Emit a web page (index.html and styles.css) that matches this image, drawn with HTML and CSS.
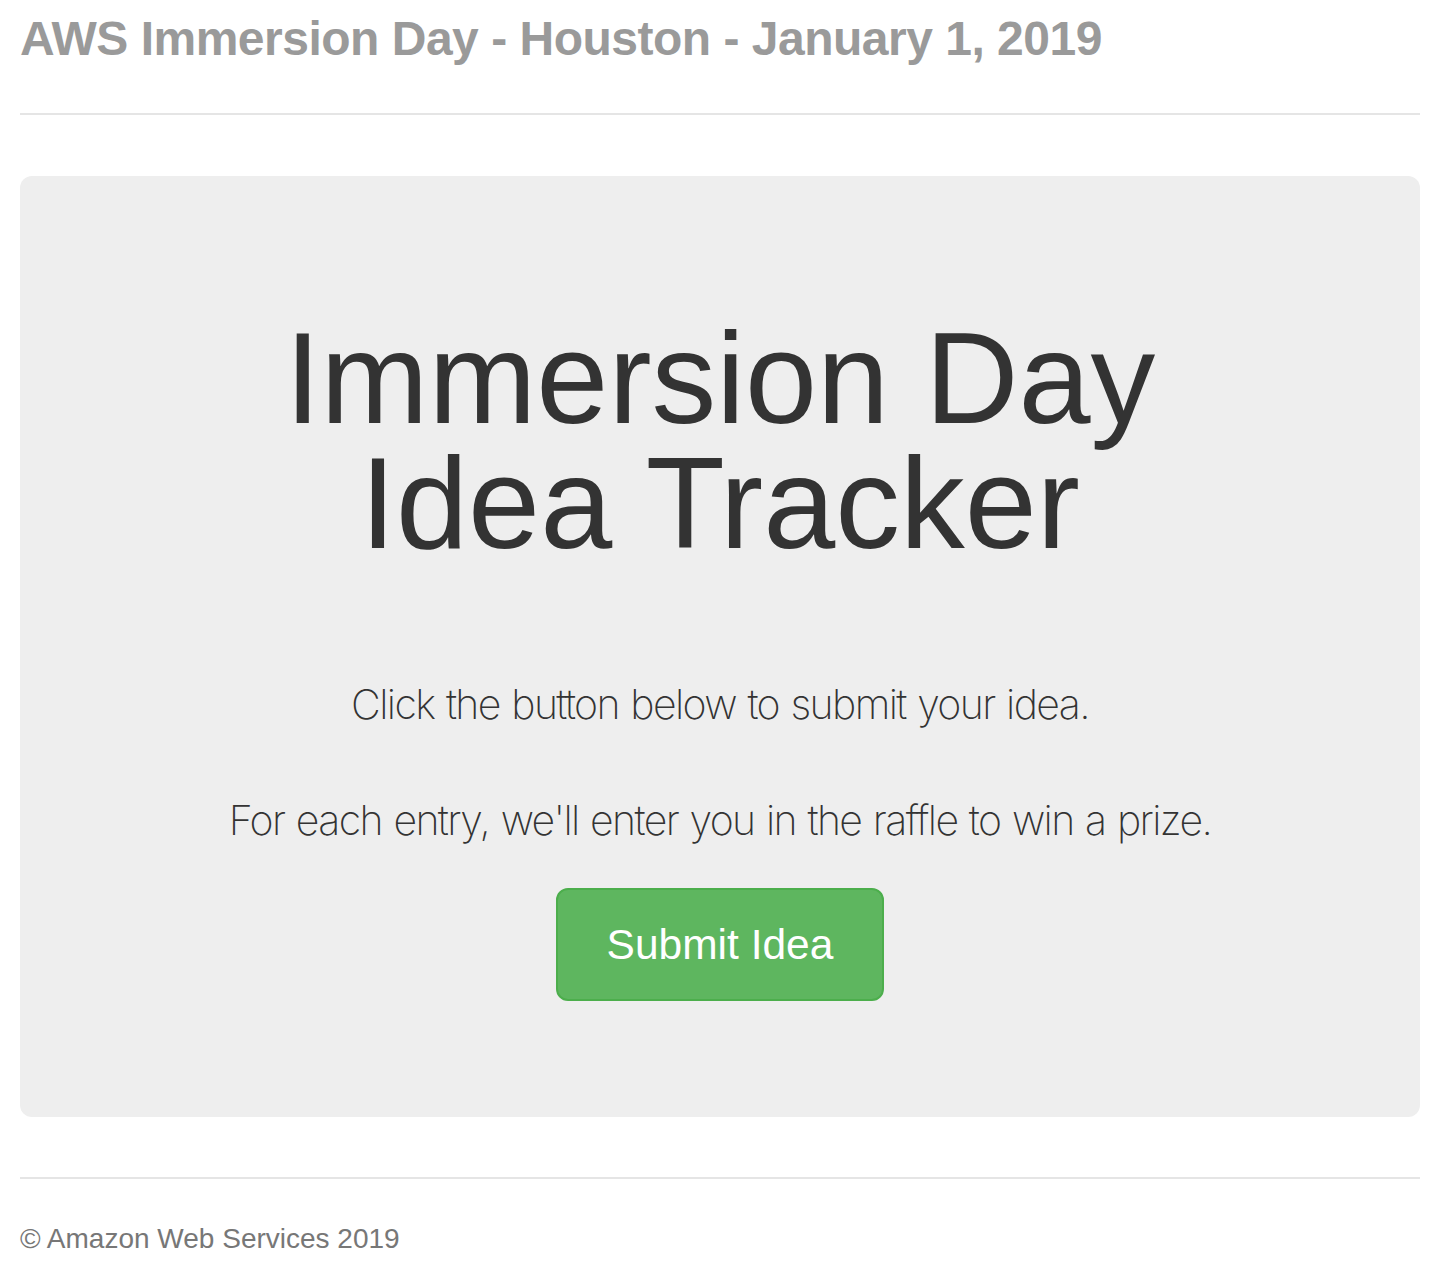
FILE: index.html
```html
<!DOCTYPE html>
<html lang="en">
<head>
<meta charset="utf-8">
<title>Immersion Day Idea Tracker</title>
<link rel="stylesheet" href="styles.css">
</head>
<body>
<div class="container">
  <div class="header">
    <h3 class="header-title">AWS Immersion Day - Houston - January 1, 2019</h3>
  </div>
  <div class="jumbotron">
    <h1 class="jumbo-title"><span class="jumbo-line">Immersion Day</span><span class="jumbo-line">Idea Tracker</span></h1>
    <p class="lead">Click the button below to submit your idea.</p>
    <p class="lead">For each entry, we'll enter you in the raffle to win a prize.</p>
    <p class="action"><a class="btn-submit" href="#">Submit Idea</a></p>
  </div>
  <div class="footer">
    <p class="footer-text">© Amazon Web Services 2019</p>
  </div>
</div>
</body>
</html>
```
FILE: styles.css
```css
html, body {
  margin: 0;
  padding: 0;
  background: #fff;
}
body {
  font-family: "Liberation Sans", Arial, sans-serif;
  color: #333;
}
.container {
  padding: 0 26px 0 20px;
}
.header {
  border-bottom: 2px solid #e5e5e5;
  height: 113px;
}
.header-title {
  margin: 0;
  padding-top: 11px;
  font-size: 48px;
  line-height: 56px;
  font-weight: 700;
  color: #9a9a9a;
  letter-spacing: -0.5px;
}
.jumbotron {
  margin-top: 61px;
  height: 941px;
  box-sizing: border-box;
  background: #eee;
  border-radius: 12px;
  text-align: center;
  padding-top: 140px;
}
.jumbo-title {
  margin: 0;
  font-size: 129.5px;
  line-height: 125px;
  font-weight: 400;
  color: #333;
}
.jumbo-line {
  display: block;
}
.lead {
  margin: 0;
  font-family: "Inter", "Liberation Sans", sans-serif;
  font-weight: 200;
  font-size: 41px;
  line-height: 60px;
  letter-spacing: -1.6px;
  word-spacing: 1.5px;
}
.jumbo-title + .lead {
  margin-top: 108px;
}
.lead + .lead {
  margin-top: 56px;
}
.action {
  margin: 38px 0 0;
}
.btn-submit {
  display: inline-block;
  width: 328px;
  height: 113px;
  box-sizing: border-box;
  line-height: 109px;
  background: #5eb65f;
  border: 2px solid #4cae4c;
  border-radius: 12px;
  color: #fff;
  font-size: 42.5px;
  text-decoration: none;
}
.footer {
  margin-top: 60px;
  border-top: 2px solid #e5e5e5;
}
.footer-text {
  margin: 0;
  padding-top: 40px;
  font-size: 28px;
  line-height: 40px;
  color: #777;
}
```
